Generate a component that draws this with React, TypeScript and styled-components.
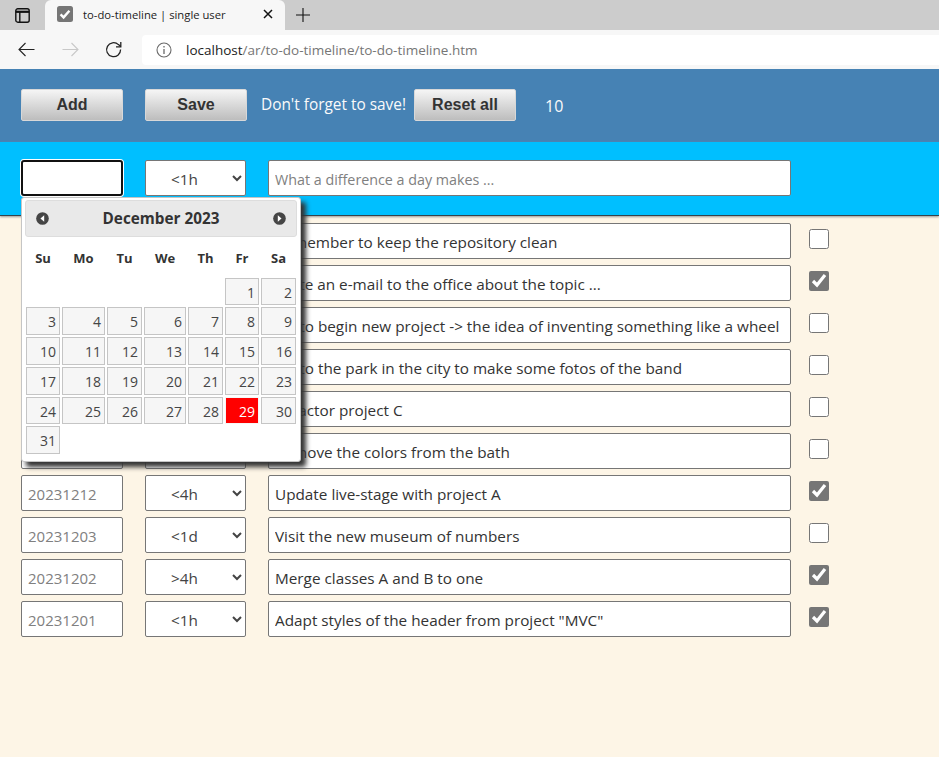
import React from 'react';
import styled, { createGlobalStyle } from 'styled-components';

const GlobalStyle = createGlobalStyle`
  html, body {
    margin: 0;
    padding: 0;
    background: #fdf5e6;
  }
  * {
    box-sizing: border-box;
  }
`;

interface Task {
  date: string;
  time: string;
  text: string;
  done: boolean;
}

const tasks: Task[] = [
  { date: '20231228', time: '<1h', text: 'Remember to keep the repository clean', done: false },
  { date: '20231227', time: '<1h', text: 'Write an e-mail to the office about the topic ...', done: true },
  { date: '20231222', time: '<4h', text: 'Go to begin new project -> the idea of inventing something like a wheel', done: false },
  { date: '20231220', time: '<1d', text: 'Go to the park in the city to make some fotos of the band', done: false },
  { date: '20231218', time: '>4h', text: 'Refactor project C', done: false },
  { date: '20231214', time: '<1h', text: 'Remove the colors from the bath', done: false },
  { date: '20231212', time: '<4h', text: 'Update live-stage with project A', done: true },
  { date: '20231203', time: '<1d', text: 'Visit the new museum of numbers', done: false },
  { date: '20231202', time: '>4h', text: 'Merge classes A and B to one', done: true },
  { date: '20231201', time: '<1h', text: 'Adapt styles of the header from project "MVC"', done: true },
];

const timeOptions = ['<1h', '<4h', '>4h', '<1d'];
const weekDays = ['Su', 'Mo', 'Tu', 'We', 'Th', 'Fr', 'Sa'];
const daysInMonth = Array.from({ length: 31 }, (_, i) => i + 1);

function TimeSelect({ value }: { value: string }) {
  return (
    <TimeBox defaultValue={value}>
      {timeOptions.map((option) => (
        <option key={option} value={option}>{option}</option>
      ))}
    </TimeBox>
  );
}

function DatePicker() {
  return (
    <Picker>
      <PickerHeader>
        <NavIcon viewBox="0 0 14 14">
          <circle cx="7" cy="7" r="6.8" fill="#454545" />
          <path d="M8.8 3.6 L4.8 7 L8.8 10.4 Z" fill="#fff" />
        </NavIcon>
        <PickerTitle>December 2023</PickerTitle>
        <NavIcon viewBox="0 0 14 14">
          <circle cx="7" cy="7" r="6.8" fill="#454545" />
          <path d="M5.2 3.6 L9.2 7 L5.2 10.4 Z" fill="#fff" />
        </NavIcon>
      </PickerHeader>
      <WeekRow>
        {weekDays.map((day) => (
          <WeekDay key={day}>{day}</WeekDay>
        ))}
      </WeekRow>
      <DayGrid>
        {daysInMonth.map((day) => (
          <DayCell key={day} $first={day === 1} $today={day === 29}>{day}</DayCell>
        ))}
      </DayGrid>
    </Picker>
  );
}

export default function App() {
  return (
    <>
      <GlobalStyle />
      <TabStrip>
        <WindowButton>
          <svg width="15" height="15" viewBox="0 0 15 15" fill="none" stroke="#111" strokeWidth="1.4">
            <rect x="0.8" y="0.8" width="13.4" height="13.4" rx="2" />
            <path d="M0.8 3.8 H14.2" strokeWidth="2.2" />
            <path d="M4.8 4 V14" />
          </svg>
        </WindowButton>
        <Tab>
          <svg width="16" height="16" viewBox="0 0 16 16">
            <rect width="16" height="16" rx="2.5" fill="#767676" />
            <path d="M3.6 8.4 L6.6 11.4 L12.4 4.8" fill="none" stroke="#fff" strokeWidth="2.4" />
          </svg>
          <TabTitle>to-do-timeline | single user</TabTitle>
          <svg width="10" height="10" viewBox="0 0 10 10" stroke="#111" strokeWidth="1.5">
            <path d="M1 1 L9 9 M9 1 L1 9" />
          </svg>
        </Tab>
        <NewTab>
          <svg width="16" height="16" viewBox="0 0 16 16" stroke="#111" strokeWidth="1.1">
            <path d="M8 1 V15 M1 8 H15" />
          </svg>
        </NewTab>
      </TabStrip>
      <Toolbar>
        <NavButton>
          <svg width="17" height="15" viewBox="0 0 17 15" fill="none" stroke="#222" strokeWidth="1.1">
            <path d="M16.5 7.5 H1 M7.5 1 L1 7.5 L7.5 14" />
          </svg>
        </NavButton>
        <NavButton>
          <svg width="17" height="15" viewBox="0 0 17 15" fill="none" stroke="#c8c8c8" strokeWidth="1.1">
            <path d="M0.5 7.5 H16 M9.5 1 L16 7.5 L9.5 14" />
          </svg>
        </NavButton>
        <NavButton>
          <svg width="18" height="18" viewBox="0 0 18 18" fill="none" stroke="#222" strokeWidth="1.3">
            <path d="M15.6 8.6 A7 7 0 1 1 13.4 3.6 L15.8 5.6" />
            <path d="M15.8 1 V5.8 H11" />
          </svg>
        </NavButton>
        <UrlBar>
          <svg width="16" height="16" viewBox="0 0 16 16" fill="none" stroke="#6a6a6a" strokeWidth="1.1">
            <circle cx="8" cy="8" r="7" />
            <path d="M8 7 V12 M8 4 V5.4" strokeWidth="1.3" />
          </svg>
          <UrlText>localhost<UrlPath>/ar/to-do-timeline/to-do-timeline.htm</UrlPath></UrlText>
        </UrlBar>
      </Toolbar>

      <Page>
        <HeaderBar>
          <ActionButton>Add</ActionButton>
          <ActionButton>Save</ActionButton>
          <SaveHint>Don't forget to save!</SaveHint>
          <ActionButton>Reset all</ActionButton>
          <Counter>10</Counter>
        </HeaderBar>

        <NewTaskBar>
          <DateWrap>
            <DateInput $focused defaultValue="" />
            <DatePicker />
          </DateWrap>
          <TimeSelect value="<1h" />
          <TextInput placeholder="What a difference a day makes ..." />
        </NewTaskBar>

        <TaskList>
          {tasks.map((task) => (
            <TaskRow key={task.date}>
              <DateInput readOnly defaultValue={task.date} />
              <TimeSelect value={task.time} />
              <TextInput defaultValue={task.text} />
              <DoneCheck type="checkbox" defaultChecked={task.done} />
            </TaskRow>
          ))}
        </TaskList>
      </Page>
    </>
  );
}

const TabStrip = styled.div`
  height: 30px;
  background-color: #cccccc;
  display: flex;
  align-items: flex-end;
`;

const WindowButton = styled.div`
  width: 45px;
  height: 30px;
  padding-right: 1px;
  display: flex;
  align-items: center;
  justify-content: center;
`;

const Tab = styled.div`
  width: 240px;
  height: 30px;
  background-color: #f7f7f7;
  border-radius: 6px 6px 0 0;
  display: flex;
  align-items: center;
  padding: 0 12px 2px 12px;
`;

const TabTitle = styled.span`
  flex: 1;
  margin-left: 10px;
  font-family: "Open Sans", sans-serif;
  font-size: 11.25px;
  color: #222;
`;

const NewTab = styled.div`
  width: 36px;
  height: 30px;
  display: flex;
  align-items: center;
  justify-content: center;
`;

const Toolbar = styled.div`
  height: 39px;
  background-color: #f7f7f7;
  display: flex;
  align-items: center;
  padding-left: 4px;
`;

const NavButton = styled.div`
  width: 44px;
  height: 30px;
  display: flex;
  align-items: center;
  justify-content: center;
`;

const UrlBar = styled.div`
  width: 797px;
  height: 30px;
  margin-left: 6px;
  background-color: #fff;
  border-radius: 4px 0 0 4px;
  display: flex;
  align-items: center;
  padding-left: 14px;
`;

const UrlText = styled.span`
  margin-left: 14px;
  font-family: "Open Sans", sans-serif;
  font-size: 13.5px;
  color: #222;
`;

const UrlPath = styled.span`
  color: #767676;
`;

const Page = styled.div`
  background-color: #fdf5e6;
  min-height: 688px;
  font-family: "Open Sans", sans-serif;
`;

const HeaderBar = styled.div`
  height: 73px;
  background-color: #4682b4;
  display: flex;
  align-items: center;
  padding: 0 21px 2px;
`;

const ActionButton = styled.button`
  width: 102px;
  height: 32px;
  margin-right: 22px;
  padding: 0;
  border: 1px solid #d8d8d8;
  border-radius: 2px;
  background: linear-gradient(#f5f5f5, #bdbdbd);
  color: #333;
  font-family: "Liberation Sans", sans-serif;
  font-size: 16px;
  font-weight: bold;
  cursor: pointer;
`;

const SaveHint = styled.span`
  width: 145px;
  margin: 0 8px 1px -8px;
  color: #fafafa;
  font-family: "Open Sans", sans-serif;
  font-size: 15.4px;
  font-weight: 500;
  white-space: nowrap;
`;

const Counter = styled.span`
  margin: 2px 0 0 7px;
  color: #fafafa;
  font-size: 16px;
  font-weight: 500;
`;

const NewTaskBar = styled.div`
  position: relative;
  height: 74px;
  background-color: #00bfff;
  border-bottom: 1px solid #34444c;
  box-shadow: 0 1px 2px #999;
  display: flex;
  align-items: flex-start;
  padding: 18px 21px 0;
  gap: 22px;
`;

const DateWrap = styled.div`
  position: relative;
  width: 102px;
`;

const DateInput = styled.input<{ $focused?: boolean }>`
  width: 102px;
  height: 36px;
  padding: 2px 6px 0;
  background-color: #fff;
  border: 1px solid #767676;
  border-radius: 2px;
  color: #808080;
  font-family: "Open Sans", sans-serif;
  font-size: 15px;
  outline: none;
  ${({ $focused }) => $focused && 'border: 2px solid #111; border-radius: 3px; box-shadow: 0 0 0 1px #fff;'}
`;

const TimeBox = styled.select`
  width: 101px;
  height: 36px;
  padding: 2px 10px 0 0;
  background-color: #fff;
  border: 1px solid #767676;
  border-radius: 2px;
  color: #444;
  font-family: "Open Sans", sans-serif;
  font-size: 15.3px;
  text-align: center;
  outline: none;
`;

const TextInput = styled.input`
  width: 523px;
  height: 36px;
  padding: 2px 6px 0;
  background-color: #fff;
  border: 1px solid #767676;
  border-radius: 2px;
  color: #333;
  font-family: "Open Sans", sans-serif;
  font-size: 15.3px;
  outline: none;

  &::placeholder {
    color: #808080;
    font-size: 14.3px;
  }
`;

const TaskList = styled.div`
  display: flex;
  flex-direction: column;
  gap: 6px;
  padding: 7px 21px 0;
`;

const TaskRow = styled.div`
  display: flex;
  align-items: flex-start;
  gap: 22px;
`;

const DoneCheck = styled.input`
  width: 20px;
  height: 20px;
  margin: 6px 0 0 -4px;
  accent-color: #767676;
`;

const Picker = styled.div`
  position: absolute;
  top: 37px;
  left: 0;
  z-index: 10;
  width: 280px;
  height: 265px;
  padding: 2px 3px;
  background-color: #fff;
  border: 1px solid #c5c5c5;
  border-radius: 3px;
  box-shadow: 5px 5px 5px #333;
`;

const PickerHeader = styled.div`
  height: 37px;
  background-color: #e9e9e9;
  border: 1px solid #dddddd;
  border-radius: 3px;
  display: flex;
  align-items: center;
  justify-content: space-between;
  padding: 0 10px;
`;

const PickerTitle = styled.span`
  margin-bottom: 1px;
  color: #333;
  font-size: 15.3px;
  font-weight: 700;
`;

const NavIcon = styled.svg`
  width: 13px;
  height: 13px;
`;

const WeekRow = styled.div`
  display: grid;
  grid-template-columns: 34px 43px 35px 42px 35px 34px 35px;
  column-gap: 2px;
  height: 41px;
  align-items: center;
  padding-left: 1px;
`;

const WeekDay = styled.span`
  text-align: center;
  color: #333;
  font-size: 13px;
  font-weight: 700;
`;

const DayGrid = styled.div`
  display: grid;
  grid-template-columns: 34px 43px 35px 42px 35px 34px 35px;
  grid-template-rows: 27px 28px 28px 28px 27px 28px;
  gap: 2px;
  padding-left: 1px;
`;

const DayCell = styled.span<{ $first?: boolean; $today?: boolean }>`
  border: 1px solid ${({ $today }) => ($today ? '#f6f6f6' : '#c5c5c5')};
  background-color: ${({ $today }) => ($today ? '#ff0000' : '#f6f6f6')};
  color: ${({ $today }) => ($today ? '#fff' : '#454545')};
  font-size: 14px;
  line-height: 27px;
  padding-right: 3px;
  text-align: right;
  ${({ $first }) => $first && 'grid-column-start: 6;'}
`;
